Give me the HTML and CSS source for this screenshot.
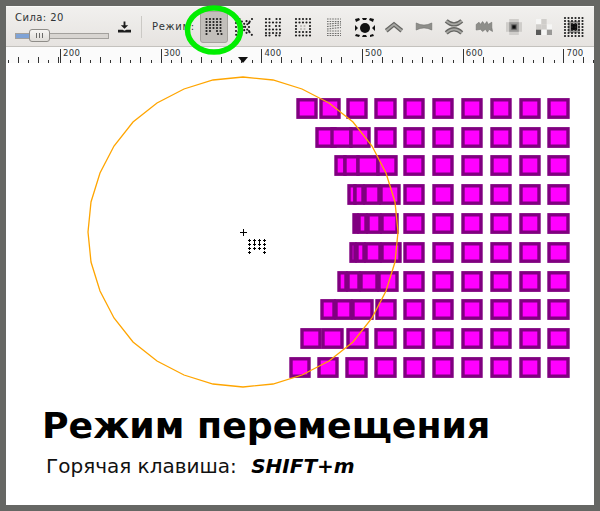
FILE: index.html
```html
<!DOCTYPE html>
<html lang="en">
  <head>
    <meta charset="UTF-8" />
    <title>Режим перемещения</title>
    <link rel="stylesheet" href="styles.css">
  </head>
  <body>
    <div class="window">
      <div class="toolbar">
        <div class="strength">
          <div class="strength-label">Сила: 20</div>
          <div class="slider">
            <div class="slider-fill"></div>
            <div class="slider-thumb"><span></span><span></span><span></span></div>
          </div>
        </div>
        <svg class="save-icon" viewBox="0 0 14 12">
          <path class="save-dark" d="M6 0h2v4h3L7 8 3 4h3z" />
          <path class="save-dark" d="M0 9h5l2 1 2-1h5v3H0z" />
        </svg>
        <div class="separator"></div>
        <div class="mode-label">Режим:</div>

        <div class="modes">
          <div class="mode selected">
            <svg class="icon" viewBox="0 0 24 24">
              <path class="dots" d="M4.5 4H21M4.5 7H21M4.5 10H21M4.5 13H21M4.5 16H9M15 16H21M4.5 19H8M16 19H21" />
            </svg>
          </div>
          <div class="mode">
            <svg class="icon" viewBox="0 0 24 24">
              <path class="dots" d="M4 4L11 12L4 20M20 4L13 12L20 20M7.5 4L12 9L16.5 4M7.5 20L12 15L16.5 20M4 12H7M17 12H20M4 8H7M17 8H20M4 16H7M17 16H20" />
            </svg>
          </div>
          <div class="mode">
            <svg class="icon" viewBox="0 0 24 24">
              <path class="dots" d="M4 4H11M14.5 4H21M4 7.5H21M4 11H10M14 11H21M4 14.5H8M11 14.5H21M4 18H21M4 20.5H10M14 20.5H21" />
            </svg>
          </div>
          <div class="mode">
            <svg class="icon" viewBox="0 0 24 24">
              <path class="dots" d="M4 4H21M4 7.5H21M4 17H21M4 20.5H21M4 11H7M18 11H21M4 14H7M18 14H21" />
              <path class="dots faint" d="M9 11H16M9 14H16" />
            </svg>
          </div>
          <div class="mode">
            <svg class="icon" viewBox="0 0 24 24">
              <path class="fine" d="M5 4H19M5 6.5H19M5 9L19 8M5 11.5L19 10M5 14L19 12.5M5 16H19M5 18.5H19M5 20.5H19" />
            </svg>
          </div>
          <div class="mode">
            <svg class="icon" viewBox="0 0 24 24">
              <circle cx="13" cy="13" r="5" />
              <path class="blob" d="M3 4L7 3 8 5 4 7zM10 3H15L14 5H11zM18 3L22 4 21 7 17 5zM3 10L6 13 3 16zM23 10V16L20 13zM4 19L8 20 7 22 3 21zM11 20H14L15 22H10zM18 20L21 19 22 21 18 22z" />
            </svg>
          </div>
          <div class="mode">
            <svg class="icon wide" viewBox="0 0 28 24">
              <path class="band" d="M3 18L14 9L25 18" />
              <path class="band-core" d="M3 18L14 9L25 18" />
            </svg>
          </div>
          <div class="mode">
            <svg class="icon wide" viewBox="0 0 28 24">
              <path class="band-thin" d="M3 7Q14 13 25 7V17Q14 11 3 17z" />
            </svg>
          </div>
          <div class="mode">
            <svg class="icon wide" viewBox="0 0 28 24">
              <path class="band" d="M3 4Q14 14 25 4" />
              <path class="band" d="M3 21Q14 11 25 21" />
              <path class="band-core" d="M3 4Q14 14 25 4" />
              <path class="band-core" d="M3 21Q14 11 25 21" />
            </svg>
          </div>
          <div class="mode">
            <svg class="icon wide" viewBox="0 0 28 24">
              <path class="band-thin" d="M3 9L7 6 9 9 12 5 15 9 18 5 20 9 25 6V13L26 19 21 16 19 20 16 16 12 19 9 16 3 17z" />
            </svg>
          </div>
          <div class="mode">
            <svg class="icon small" viewBox="0 0 15 15">
              <rect class="g1" x="3" y="0" width="9" height="15" />
              <rect class="g1" x="0" y="3" width="15" height="9" />
              <rect class="g2" x="3" y="3" width="9" height="9" />
              <rect class="g3" x="5" y="5" width="5" height="5" />
              <rect class="g4" x="6" y="6" width="3" height="3" />
            </svg>
          </div>
          <div class="mode">
            <svg class="icon small" viewBox="0 0 15 15">
              <rect class="g0" x="0" y="0" width="5" height="5" />
              <rect class="g1" x="5" y="0" width="5" height="5" />
              <rect class="g0" x="10" y="5" width="5" height="5" />
              <rect class="g1" x="5" y="5" width="5" height="5" />
              <rect class="g1" x="0" y="5" width="5" height="5" />
              <rect class="g3" x="0" y="10" width="5" height="5" />
              <rect class="g2" x="10" y="10" width="5" height="5" />
              <rect class="g0" x="5" y="10" width="5" height="5" />
            </svg>
          </div>
          <div class="mode">
            <svg class="icon" viewBox="0 0 24 24">
              <rect class="g2" x="6" y="6" width="12" height="12" />
              <rect class="g4" x="9" y="9" width="6" height="6" />
              <path class="dots" d="M3 3H21M3 6H21M3 9H21M3 12H21M3 15H21M3 18H21M3 21H21" />
            </svg>
          </div>
        </div>
      </div>

      <div class="ruler">
        <div class="ruler-start"></div>
        <div class="ruler-part">200</div>
        <div class="ruler-part">300</div>
        <div class="ruler-part">400</div>
        <div class="ruler-part">500</div>
        <div class="ruler-part">600</div>
        <div class="ruler-part">700</div>
        <div class="ruler-marker"></div>
      </div>

      <div class="canvas">
        <!-- viewBox uses page coordinates -->
        <svg class="drawing" viewBox="6 63 588 342">
          <defs>
            <g id="cols">
              <rect class="sq" x="405" width="18" />
              <rect class="sq" x="434" width="18" />
              <rect class="sq" x="463" width="18" />
              <rect class="sq" x="492" width="18" />
              <rect class="sq" x="521" width="18" />
              <rect class="sq" x="549" width="19" />
            </g>
          </defs>

          <g transform="translate(0,98)">
            <rect class="sq" x="298" width="18" />
            <rect class="sq" x="321" width="18" />
            <rect class="sq" x="348" width="18" />
            <rect class="sq" x="376" width="19" />
            <use href="#cols" />
          </g>
          <g transform="translate(0,127)">
            <rect class="sq" x="317" width="18" />
            <rect class="sq" x="332" width="19" />
            <rect class="sq" x="351" width="18" />
            <rect class="sq" x="376" width="19" />
            <use href="#cols" />
          </g>
          <g transform="translate(0,155)">
            <rect class="sq" x="336" width="9" />
            <rect class="sq" x="345" width="13" />
            <rect class="sq" x="358" width="20" />
            <rect class="sq" x="378" width="18" />
            <use href="#cols" />
          </g>
          <g transform="translate(0,184)">
            <rect class="sq" x="349" width="6" />
            <rect class="sq" x="355" width="8" />
            <rect class="sq" x="365" width="14" />
            <rect class="sq" x="381" width="18" />
            <use href="#cols" />
          </g>
          <g transform="translate(0,213)">
            <rect class="sq" x="354" width="3" />
            <rect class="sq" x="359" width="7" />
            <rect class="sq" x="368" width="12" />
            <rect class="sq" x="382" width="15" />
            <use href="#cols" />
          </g>
          <g transform="translate(0,242)">
            <rect class="sq" x="351" width="4" />
            <rect class="sq" x="357" width="7" />
            <rect class="sq" x="366" width="14" />
            <rect class="sq" x="382" width="18" />
            <use href="#cols" />
          </g>
          <g transform="translate(0,271)">
            <rect class="sq" x="339" width="7" />
            <rect class="sq" x="348" width="11" />
            <rect class="sq" x="361" width="16" />
            <rect class="sq" x="379" width="18" />
            <use href="#cols" />
          </g>
          <g transform="translate(0,299)">
            <rect class="sq" x="322" width="12" />
            <rect class="sq" x="336" width="15" />
            <rect class="sq" x="353" width="19" />
            <rect class="sq" x="377" width="18" />
            <use href="#cols" />
          </g>
          <g transform="translate(0,328)">
            <rect class="sq" x="302" width="18" />
            <rect class="sq" x="323" width="19" />
            <rect class="sq" x="348" width="19" />
            <rect class="sq" x="376" width="19" />
            <use href="#cols" />
          </g>
          <g transform="translate(0,357)">
            <rect class="sq" x="291" width="18" />
            <rect class="sq" x="319" width="18" />
            <rect class="sq" x="347" width="19" />
            <rect class="sq" x="376" width="19" />
            <use href="#cols" />
          </g>

          <polygon class="brush" points="398,232 395,262 386,291 372,318 353,342 329,361 302,375 273,384 243,387 213,384 184,375 157,361 133,342 114,318 100,291 91,262 88,232 91,202 100,173 114,146 133,122 157,103 184,89 213,80 243,77 273,80 302,89 329,103 353,122 372,146 386,173 395,202" />
          <path class="cursor" d="M243.5 229V236M240 232.5H247" />
          <path class="cursor" d="M249.5 239V242M248 240.5H251M264.5 239V242M263 240.5H266M249.5 243V246M248 244.5H251M254.5 243V246M253 244.5H256M259.5 243V246M258 244.5H261M264.5 243V246M263 244.5H266M249.5 247V250M248 248.5H251M254.5 247V250M253 248.5H256M259.5 247V250M258 248.5H261M264.5 247V250M263 248.5H266M249.5 251V254M248 252.5H251M264.5 251V254M263 252.5H266M254.5 239V245M253 240.5H256M259.5 239V245M258 240.5H261" />
        </svg>
        <h1 class="title">Режим перемещения</h1>
        <p class="hotkey">Горячая клавиша: <b>SHIFT+m</b></p>
      </div>

      <svg class="highlight" viewBox="0 0 60 52">
        <ellipse cx="30" cy="26" rx="26.5" ry="22" />
      </svg>
    </div>
  </body>
</html>
```

FILE: styles.css
```css
html,
body {
  margin: 0;
  padding: 0;
  height: 100%;
  overflow: hidden;
  background-color: #666764;
}
body {
  font-family: "DejaVu Sans", sans-serif;
}
.window {
  position: relative;
  box-sizing: border-box;
  width: 600px;
  height: 511px;
  padding: 6px;
  display: flex;
  flex-direction: column;
}

/* toolbar */
.toolbar {
  box-sizing: border-box;
  height: 41px;
  flex: none;
  display: flex;
  align-items: center;
  padding-left: 9px;
  background: linear-gradient(#f1f0ee, #e6e3e0);
  border-top: 1px solid #fbfbfa;
  border-bottom: 1px solid #c4c2be;
}
.strength {
  width: 94px;
  flex: none;
  margin-bottom: 3px;
}
.strength-label {
  font-size: 10px;
  letter-spacing: 0.45px;
  color: #2e3436;
  margin-bottom: 9px;
  line-height: 13px;
}
.slider {
  position: relative;
  box-sizing: border-box;
  height: 6px;
  background-color: #d8d5d1;
  border: 1px solid #a3a19d;
}
.slider-fill {
  width: 15px;
  height: 100%;
  background-color: #7fa3d6;
}
.slider-thumb {
  position: absolute;
  left: 13px;
  top: -5px;
  box-sizing: border-box;
  width: 21px;
  height: 13px;
  display: flex;
  gap: 2px;
  align-items: center;
  justify-content: center;
  background: linear-gradient(#f6f5f3, #dfddd9);
  border: 1px solid #8f8d89;
  border-radius: 3px;
}
.slider-thumb span {
  width: 1px;
  height: 5px;
  background-color: #6a6a68;
}
.save-icon {
  width: 13px;
  height: 12px;
  flex: none;
  margin-left: 9px;
  margin-top: 1px;
}
.save-dark {
  fill: #1c1c1c;
}
.separator {
  width: 1px;
  height: 22px;
  flex: none;
  margin-left: 10px;
  background-color: #cbc9c5;
}
.mode-label {
  width: 47px;
  flex: none;
  margin-left: 10px;
  font-size: 10px;
  letter-spacing: 0.7px;
  color: #2e3436;
}
.modes {
  display: flex;
}
.mode {
  width: 30px;
  height: 32px;
  flex: none;
  display: flex;
  align-items: center;
  justify-content: center;
}
.mode.selected {
  box-sizing: border-box;
  width: 28px;
  margin: 0 1px;
  background-color: #c2bfbb;
  border: 1px solid #a5a29e;
  border-radius: 3px;
}
.icon {
  width: 24px;
  height: 24px;
  display: block;
}
.icon.wide {
  width: 20px;
  height: 17px;
}
.icon.small {
  width: 16px;
  height: 16px;
}
.dots {
  fill: none;
  stroke: #1f1f1f;
  stroke-width: 2.2;
  stroke-linecap: round;
  stroke-dasharray: 0 3.5;
}
.dots.faint {
  stroke: #b9b7b3;
}
.fine {
  fill: none;
  stroke: #6e6e6c;
  stroke-width: 1.2;
  stroke-dasharray: 1.6 1;
}
.blob {
  fill: #111;
}
.icon circle {
  fill: #111;
}
.band {
  fill: none;
  stroke: #666663;
  stroke-width: 6;
}
.band-core {
  fill: none;
  stroke: #a8a8a4;
  stroke-width: 2.5;
}
.band-thin {
  fill: #8e8e8a;
  stroke: #6b6b68;
  stroke-width: 0.8;
}
.g0 {
  fill: #f6f6f5;
}
.g1 {
  fill: #cfcdca;
}
.g2 {
  fill: #9a9997;
}
.g3 {
  fill: #5a5a59;
}
.g4 {
  fill: #0c0c0c;
}

/* ruler */
.ruler {
  position: relative;
  height: 16px;
  flex: none;
  display: flex;
  overflow: hidden;
  background-color: #fbfbfb;
}
.ruler-start,
.ruler-part {
  box-sizing: border-box;
  flex: none;
  background-repeat: no-repeat;
  background-image:
    repeating-linear-gradient(90deg, #333 0 1px, transparent 1px 20.14px),
    repeating-linear-gradient(90deg, #333 0 1px, transparent 1px 20.14px),
    linear-gradient(#333, #333);
  background-size: 100% 3px, 100% 6px, 1px 14px;
  background-position: 0 100%, 0 100%, 0 100%;
}
.ruler-start {
  width: 54px;
  background-position: 2px 100%, 12px 100%, -2px 100%;
}
.ruler-part {
  width: 100.7px;
  padding-left: 3px;
  font-size: 8.5px;
  letter-spacing: 0.3px;
  line-height: 13px;
  color: #2e3436;
  background-position: 10px 100%, 20px 100%, 0 100%;
}
.ruler-marker {
  position: absolute;
  left: 232px;
  top: 10px;
  width: 0;
  height: 0;
  border-left: 5px solid transparent;
  border-right: 5px solid transparent;
  border-top: 6px solid #111;
}

/* canvas */
.canvas {
  flex: 1;
  min-height: 0;
  background-color: #ffffff;
}
.drawing {
  display: block;
  width: 588px;
  height: 342px;
}
.sq {
  y: 1.8px;
  height: 17.4px;
  fill: #ff00ff;
  stroke: #800080;
  stroke-width: 3.4;
}
.brush {
  fill: none;
  stroke: #ffa500;
  stroke-width: 1.3;
}
.cursor {
  fill: none;
  stroke: #000;
  stroke-width: 1;
}
.title {
  margin: 0 0 0 36px;
  font-size: 36.3px;
  font-weight: bold;
  line-height: 42px;
  color: #000;
}
.hotkey {
  margin: 8px 0 0 40px;
  font-size: 20px;
  line-height: 22px;
  color: #111;
}
.hotkey b {
  font-style: italic;
  margin-left: 8px;
  color: #000;
}

/* green ring round the active mode */
.highlight {
  position: absolute;
  left: 184px;
  top: 4px;
  width: 60px;
  height: 52px;
}
.highlight ellipse {
  fill: none;
  stroke: #00ee00;
  stroke-width: 5.5;
}
```
